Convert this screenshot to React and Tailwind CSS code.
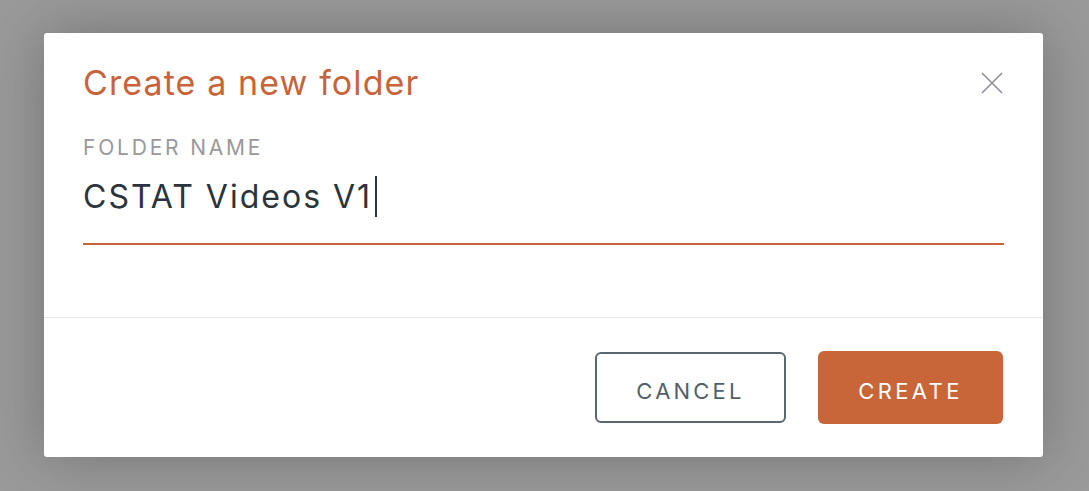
export default function App() {
  return (
    <div className="min-h-[491px] bg-[#9a9a9a] pt-[33px] pl-[44px] pr-[46px] font-['Inter',sans-serif]">
      {/* Modal */}
      <div className="w-[999px] h-[424px] bg-white rounded-[3px] shadow-[0_0_60px_rgba(0,0,0,0.25)] flex flex-col">
        <div className="px-[39px] pt-[29px] h-[285px] border-b border-[#e6e6e6]">
          <div className="flex items-start justify-between">
            <h1 className="text-[34px] leading-[42px] tracking-[1.1px] text-[#c8643a]">Create a new folder</h1>
            <button className="mt-[10px] mr-[1px] text-[#8b8d99]">
              <svg width="22" height="22" viewBox="0 0 22 22" fill="none" stroke="currentColor" strokeWidth="1.5">
                <path d="M1 1L21 21M21 1L1 21" />
              </svg>
            </button>
          </div>
          <p className="mt-[32px] text-[21px] leading-[24px] tracking-[2.8px] text-[#999999]">FOLDER NAME</p>
          <div className="mt-[16px] pb-[26px] flex items-center">
            <span className="text-[32px] leading-[40px] tracking-[2px] text-[#2b343b]">CSTAT Videos V1</span>
            <span className="ml-[3px] w-[2px] h-[41px] bg-[#2b343b]"></span>
          </div>
          <div className="h-[2px] bg-[#c8643a]"></div>
        </div>

        <div className="flex-1 flex items-center justify-end gap-[32px] px-[40px]">
          <button className="w-[191px] h-[71px] pt-[7px] border-2 border-[#5b6770] rounded-[6px] text-[22px] tracking-[3.2px] text-[#525f69]">
            CANCEL
          </button>
          <button className="w-[185px] h-[73px] pt-[7px] bg-[#c8663a] rounded-[6px] text-[22px] tracking-[3.4px] text-white">
            CREATE
          </button>
        </div>
      </div>
    </div>
  );
}
